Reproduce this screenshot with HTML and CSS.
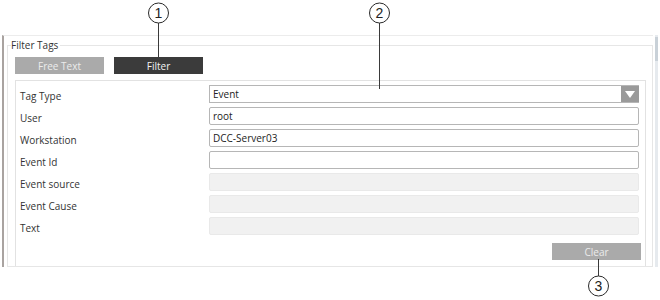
FILE: index.html
```html
<!DOCTYPE html>
<html lang="en">
<head>
  <meta charset="UTF-8">
  <meta name="viewport" content="width=device-width, initial-scale=1.0">
  <title>Filter Tags</title>
  <link rel="stylesheet" href="styles.css">
</head>
<body>
  <div class="frame">
    <div class="main">
      <fieldset class="group">
        <legend>Filter Tags</legend>
        <div class="tabs">
          <button type="button" class="tab">Free Text</button>
          <button type="button" class="tab active">Filter</button>
        </div>

        <div class="panel">
          <div class="rows">
            <label>Tag Type</label>
            <div class="select">
              <span class="select-value">Event</span>
              <span class="select-arrow"></span>
            </div>

            <label for="user">User</label>
            <input type="text" id="user" value="root">

            <label for="workstation">Workstation</label>
            <input type="text" id="workstation" value="DCC-Server03">

            <label for="event-id">Event Id</label>
            <input type="text" id="event-id">

            <label for="event-source">Event source</label>
            <input type="text" id="event-source" disabled>

            <label for="event-cause">Event Cause</label>
            <input type="text" id="event-cause" disabled>

            <label for="text">Text</label>
            <input type="text" id="text" disabled>
          </div>
          <div class="actions">
            <button type="button" class="clear-btn">Clear</button>
          </div>
        </div>
      </fieldset>
    </div>
    <div class="scrollbar"><div class="thumb"></div></div>
  </div>

  <!-- callout markers -->
  <svg class="callouts" width="660" height="300" viewBox="0 0 660 300">
    <g class="callout">
      <line x1="158.5" y1="23" x2="158.5" y2="57"></line>
      <circle cx="158.5" cy="13" r="10"></circle>
      <text x="158.5" y="18">1</text>
    </g>
    <g class="callout">
      <line x1="379.5" y1="23" x2="379.5" y2="89"></line>
      <circle cx="379.5" cy="13" r="10"></circle>
      <text x="379.5" y="18">2</text>
    </g>
    <g class="callout">
      <line x1="598.5" y1="259" x2="598.5" y2="276"></line>
      <circle cx="598.5" cy="286" r="10"></circle>
      <text x="598.5" y="291">3</text>
    </g>
  </svg>
</body>
</html>
```

FILE: styles.css
```css
body {
  margin: 0;
  padding: 0;
  background: #fff;
  font-family: "Open Sans", "Noto Sans", sans-serif;
  font-size: 10px;
  color: #333;
}

.frame {
  display: flex;
  margin: 35px 0 0 2px;
  height: 232px;
}

.main {
  width: 649px;
  border-left: 2px solid #a9a3a0;
  border-top: 1px solid #ececec;
}

.scrollbar {
  width: 3px;
  margin-left: 2px;
  background: #e6eaee;
}

.scrollbar .thumb {
  height: 24px;
  margin-top: 2px;
  background: #c9d1d8;
}

.group {
  margin: 2px 0 0 3px;
  padding: 5px 6px 0 7px;
  border: 1px solid #e6e6e6;
  height: 229px;
  display: flex;
  flex-direction: column;
  box-sizing: border-box;
}

.group legend {
  margin-left: -4px;
  padding: 0 2px 0 0;
  font-size: 10px;
  line-height: 14px;
  color: #333;
}

.tabs {
  display: flex;
  gap: 10px;
}

.tab {
  width: 89px;
  height: 17px;
  padding: 0;
  border: none;
  background: #aaa;
  color: #ececec;
  font-family: inherit;
  font-size: 10px;
}

.tab.active {
  background: #3b3b3b;
  color: #f2f2f2;
}

.panel {
  flex: 1;
  margin-top: 6px;
  padding: 4px 6px 0 4px;
  border: 1px solid #e2e2e2;
  border-bottom: none;
}

.rows {
  display: grid;
  grid-template-columns: 189px 1fr;
  grid-auto-rows: 18px;
  row-gap: 4px;
  align-items: center;
}

.rows label {
  padding-top: 3px;
}

.rows input,
.select {
  height: 18px;
  box-sizing: border-box;
  border: 1px solid #b6b6b6;
  border-radius: 2px;
  padding: 0 3px;
  font-family: inherit;
  font-size: 10px;
  color: #222;
  background: #fff;
  outline: none;
}

.rows input:disabled {
  background: #f1f1f1;
  border-color: #e9e9e9;
}

.select {
  display: flex;
  align-items: center;
  padding-right: 0;
  border-radius: 0;
}

.select-value {
  flex: 1;
}

.select-arrow {
  width: 18px;
  height: 16px;
  margin-right: -1px;
  background: #9a9a9a;
  display: flex;
  align-items: center;
  justify-content: center;
}

.select-arrow::after {
  content: "";
  border-left: 5px solid transparent;
  border-right: 5px solid transparent;
  border-top: 7px solid #fff;
}

.actions {
  display: flex;
  justify-content: flex-end;
  margin: 8px -2px 0 0;
}

.clear-btn {
  width: 89px;
  height: 17px;
  padding: 0;
  border: none;
  background: #aaa;
  color: #ececec;
  font-family: inherit;
  font-size: 10px;
}

.callouts {
  position: absolute;
  left: 0;
  top: 0;
  pointer-events: none;
}

.callout line {
  stroke: #3a3a3a;
  stroke-width: 1;
}

.callout circle {
  fill: #fff;
  stroke: #2a2a2a;
  stroke-width: 1;
}

.callout text {
  font-family: "Liberation Sans", Arial, sans-serif;
  font-size: 14px;
  fill: #222;
  text-anchor: middle;
}
```
